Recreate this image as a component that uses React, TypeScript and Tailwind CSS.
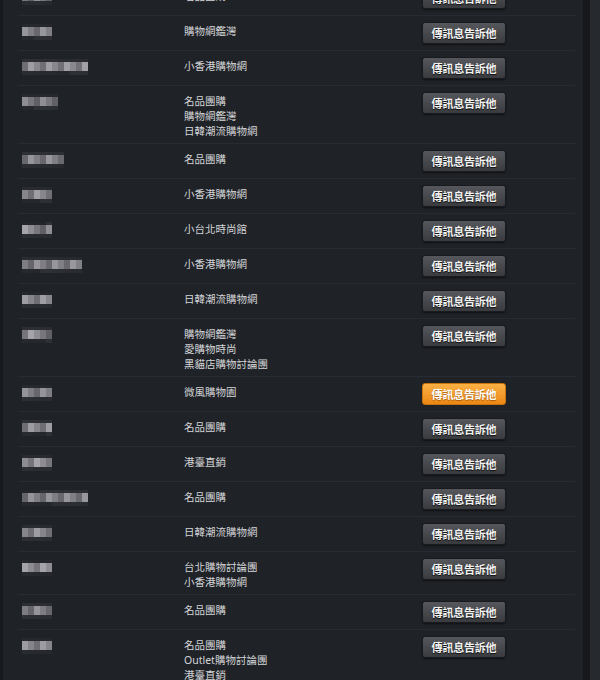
import React from "react";

type Row = { w: number; sites: string[]; hot?: boolean };

const rows: Row[] = [
  { w: 32, sites: ["名品團購"] },
  { w: 32, sites: ["購物網鑑灣"] },
  { w: 66, sites: ["小香港購物網"] },
  { w: 36, sites: ["名品團購", "購物網鑑灣", "日韓潮流購物網"] },
  { w: 44, sites: ["名品團購"] },
  { w: 32, sites: ["小香港購物網"] },
  { w: 32, sites: ["小台北時尚館"] },
  { w: 57, sites: ["小香港購物網"] },
  { w: 32, sites: ["日韓潮流購物網"] },
  { w: 32, sites: ["購物網鑑灣", "愛購物時尚", "黑貓店購物討論團"] },
  { w: 32, sites: ["微風購物園"], hot: true },
  { w: 32, sites: ["名品團購"] },
  { w: 32, sites: ["港臺直銷"] },
  { w: 66, sites: ["名品團購"] },
  { w: 32, sites: ["日韓潮流購物網"] },
  { w: 32, sites: ["台北購物討論團", "小香港購物網"] },
  { w: 32, sites: ["名品團購"] },
  { w: 32, sites: ["名品團購", "Outlet購物討論團", "港臺直銷"] },
];

// pixelated (mosaic) user name
function Mosaic({ width, seed }: { width: number; seed: number }) {
  const cells = Math.max(3, Math.round(width / 6));
  return (
    <div className="flex flex-col">
      <div className="flex h-[3px] opacity-40">
        {Array.from({ length: cells }).map((_, i) => {
          const g = 40 + ((seed * 17 + i * 29) % 30);
          return <div key={i} className="h-full w-[6px]" style={{ background: `rgb(${g},${g + 2},${g + 8})` }} />;
        })}
      </div>
      <div className="flex h-[9px]">
        {Array.from({ length: cells }).map((_, i) => {
          const g = 95 + ((seed * 31 + i * 47) % 70);
          return <div key={i} className="h-full w-[6px]" style={{ background: `rgb(${g},${g},${g + 6})` }} />;
        })}
      </div>
      <div className="flex h-[4px] opacity-40">
        {Array.from({ length: cells }).map((_, i) => {
          const g = 45 + ((seed * 13 + i * 23) % 25);
          return <div key={i} className="h-full w-[6px]" style={{ background: `rgb(${g},${g + 2},${g + 8})` }} />;
        })}
      </div>
    </div>
  );
}

function SendButton({ hot }: { hot?: boolean }) {
  return (
    <button
      className={
        hot
          ? "flex h-[22px] w-[84px] items-center justify-center rounded-[3px] border border-[#c9730c] bg-gradient-to-b from-[#fbb043] to-[#ec8812] text-[11px] font-bold tracking-[-0.2px] text-white [text-shadow:0_1px_1px_rgba(120,60,0,0.6)]"
          : "flex h-[22px] w-[84px] items-center justify-center rounded-[3px] border border-[#1a1b1e] bg-gradient-to-b from-[#55575c] to-[#393b3f] text-[11px] font-bold tracking-[-0.2px] text-[#f2f2f2] shadow-[0_1px_2px_rgba(0,0,0,0.5)] [text-shadow:0_1px_1px_rgba(0,0,0,0.8)]"
      }
      style={{ fontFamily: '"Noto Sans CJK TC", "Liberation Serif", serif' }}
    >
      傳訊息告訴他
    </button>
  );
}

export default function App() {
  return (
    <div
      className="flex h-[680px] w-[600px] overflow-hidden bg-[#1f2227]"
      style={{ fontFamily: '"Noto Sans", "Noto Sans CJK TC", sans-serif' }}
    >
      {/* left edge */}
      <div className="w-[3px] shrink-0 bg-[#17191c]" />

      {/* list */}
      <div className="w-[580px] shrink-0 pl-[15px] pr-[8px]">
        <div className="-mt-[20px] flex flex-col">
          {rows.map((r, i) => (
            <div key={i} className="flex border-t border-[#282b31] pt-[6px] pb-[6px]">
              <div className="w-[166px] shrink-0 pl-[4px] pt-[2px]">
                <Mosaic width={r.w} seed={i + 3} />
              </div>
              <div className="flex w-[238px] shrink-0 translate-y-[2px] flex-col text-[10.5px] leading-[15px] text-[#d4d5d7]">
                {r.sites.map((s) => (
                  <span key={s}>{s}</span>
                ))}
              </div>
              <div className="flex-1">
                <SendButton hot={r.hot} />
              </div>
            </div>
          ))}
        </div>
      </div>

      {/* right gutter */}
      <div className="w-[7px] shrink-0 bg-[#16181b]" />
      <div className="flex-1 bg-[#262a2f]" />
    </div>
  );
}
